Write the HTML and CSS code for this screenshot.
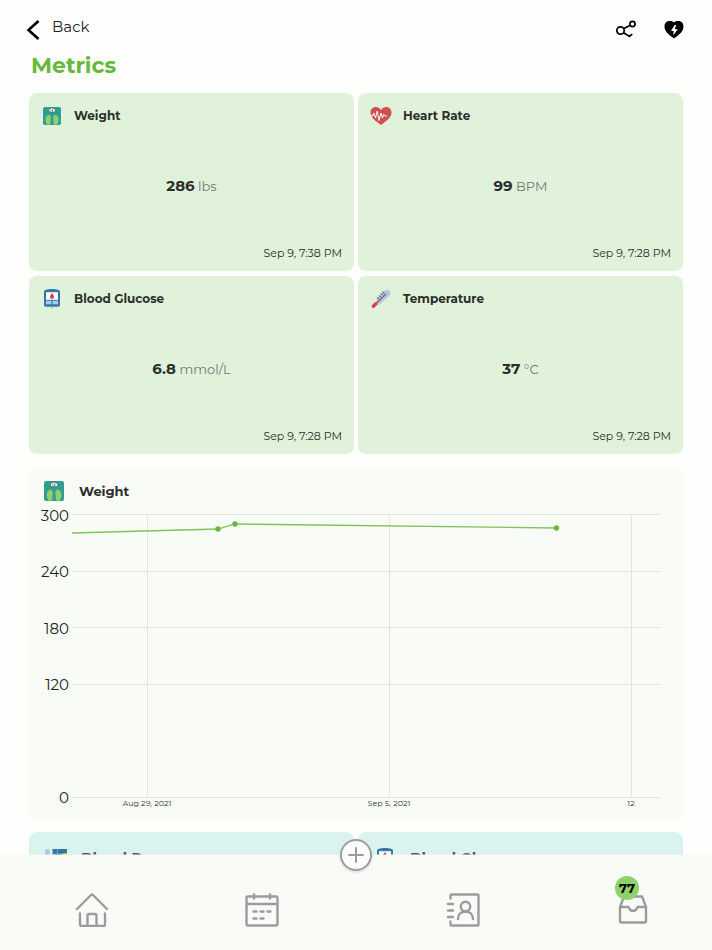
FILE: index.html
```html
<!DOCTYPE html>
<html lang="en">
<head>
<meta charset="utf-8">
<meta name="viewport" content="width=device-width, initial-scale=1">
<title>Metrics</title>
<link rel="stylesheet" href="styles.css">
</head>
<body>
<svg class="defs" aria-hidden="true">
  <symbol id="scale" viewBox="0 0 20 20">
    <rect width="20" height="20" rx="2" fill="#329e90"/>
    <path d="M6.2 4.8C6.2 2 8 1.2 10.1 1.2s4 .9 4 3.6c-1.6 1.3-6.3 1.3-7.9 0z" fill="#fff" stroke="#315d66" stroke-width=".8"/>
    <path d="M10 5l1.2-2.4M8 3.3l.8.7" stroke="#26323a" stroke-width=".9" fill="none"/>
    <path d="M7.6 9c1.3 1 1.5 3 1 5-.5 1.800 0 3-.4 4.700-.5 1.300-3.700 1.300-4.300 0-.4-2-1.300-3.700-1.100-5.700.2-2.400 2.700-5 4.800-4zM12.600 9c-1.300 1-1.500 3-1 5 .5 1.800 0 3 .4 4.700.5 1.300 3.700 1.300 4.300 0 .4-2 1.300-3.700 1.100-5.700-.2-2.400-2.700-5-4.800-4z" fill="#8fd168"/>
  </symbol>
  <symbol id="heart" viewBox="0 0 22 20">
    <path d="M11 19C6.500 15.500.5 12 .5 6.500.5 3.300 2.800 1 5.700 1 8 1 9.900 2.100 11 4c1.100-1.900 3-3 5.300-3 2.900 0 5.200 2.300 5.200 5.500C21.500 12 15.500 15.500 11 19z" fill="#cf5050"/>
    <path d="M1 10h1.500l1.200-3 1.800 5 1.700-7 1.800 9.500L11 7l1.400 5 1.300-3.500L15 10h2" fill="none" stroke="#fff" stroke-width="1" stroke-linejoin="round"/>
  </symbol>
  <symbol id="glucose" viewBox="0 0 18 20">
    <path d="M3 .7C6-.2 12-.2 15 .7c1.300.4 2 1 2 2.500v12c0 1.800-.8 2.600-2.300 2.600H3.300C1.800 17.800 1 17 1 15.200v-12C1 1.700 1.700 1.100 3 .7z" fill="#3377a7"/>
    <path d="M3 3.200h12v7.600H3z" fill="#fff"/>
    <path d="M3 11.800h5.500v3.500H3zM9.500 11.800H15v3.500H9.500z" fill="#9fcdec"/>
    <path d="M9 4c1 1.500 2 2.600 2 3.900a2 2 0 0 1-4 0C7 6.600 8 5.500 9 4z" fill="#d34747"/>
    <path d="M8.300 17h1.400v2.800H8.300z" fill="#8ab9cf"/>
  </symbol>
  <symbol id="thermometer" viewBox="0 0 20 20">
    <path d="M4 13L13 2.500C15 .5 17.300.7 18.500 2c1.200 1.400 1 3.500-.8 5.300L7 16.500z" fill="#a6cbea"/>
    <path d="M6 8.500l2 1.500M7.800 6.500l2 1.500M9.600 4.600l2 1.500M11.400 2.800l2 1.500" stroke="#387da9" stroke-width="1.300"/>
    <path d="M4 15.500L15 5" stroke="#cf4545" stroke-width="1.100"/>
    <path d="M2.300 17.300L4.600 15" stroke="#cf4545" stroke-width="3.400" stroke-linecap="round"/>
  </symbol>
  <symbol id="pressure" viewBox="0 0 22 20">
    <rect x="0" y="1" width="5" height="9" rx="2.500" fill="#a5cbe6"/>
    <path d="M2.500 9v7q0 3 4 3h4" fill="none" stroke="#a5cbe6" stroke-width="1.500"/>
    <path d="M7.500 1H22v13H7.500z" fill="#3377a7"/>
    <path d="M12.500 1v13M7.500 6H22" stroke="#8db9d5" stroke-width=".6"/>
    <circle cx="20" cy="9.500" r="4.500" fill="#f5c52c"/>
  </symbol>
</svg>

<div class="app">
  <main class="content">
    <header class="topbar">
      <a class="back" href="#">
        <svg class="back-icon" viewBox="0 0 14 20" aria-hidden="true"><path d="M12.500 1L2.500 10l10 9" fill="none" stroke="#000" stroke-width="2.600"/></svg>
        <span>Back</span>
      </a>
      <div class="actions">
        <button class="icon-button" type="button" aria-label="Share">
          <svg viewBox="0 0 20 20" fill="none" stroke="#000" stroke-width="1.700" aria-hidden="true"><circle cx="4.500" cy="10.500" r="3.700"/><circle cx="16.500" cy="4" r="2.600"/><path d="M8 8.600l6.200-3.300M7.500 12.700l5.800 3.700M12.800 15l.8 1.300 2.700-2.200"/></svg>
        </button>
        <button class="icon-button" type="button" aria-label="Health monitor">
          <svg viewBox="0 0 20 20" aria-hidden="true"><path d="M10 18.500C6 15.500.5 12 .5 6.500.5 3.200 2.600 1 5.400 1 7.500 1 9 1.200 10 2.500c1-1.300 2.500-1.500 4.600-1.500 2.800 0 4.900 2.200 4.900 5.500 0 5.500-5.500 9-9.500 12z"/><path d="M10.600 5L7 11h2.700l-.5 4.500 4.500-6.200h-2.900L12.100 5z" fill="#fff"/></svg>
        </button>
      </div>
    </header>
    <h1 class="page-title">Metrics</h1>

    <section class="cards" aria-label="Latest readings">
      <article class="card">
        <header class="card-head"><svg class="card-icon small" aria-hidden="true"><use href="#scale"/></svg><h2>Weight</h2></header>
        <p class="reading"><strong>286</strong> lbs</p>
        <time class="date">Sep 9, 7:38 PM</time>
      </article>
      <article class="card">
        <header class="card-head"><svg class="card-icon" aria-hidden="true"><use href="#heart"/></svg><h2>Heart Rate</h2></header>
        <p class="reading"><strong>99</strong> BPM</p>
        <time class="date">Sep 9, 7:28 PM</time>
      </article>
      <article class="card">
        <header class="card-head"><svg class="card-icon" aria-hidden="true"><use href="#glucose"/></svg><h2>Blood Glucose</h2></header>
        <p class="reading"><strong>6.8</strong> mmol/L</p>
        <time class="date">Sep 9, 7:28 PM</time>
      </article>
      <article class="card">
        <header class="card-head"><svg class="card-icon" aria-hidden="true"><use href="#thermometer"/></svg><h2>Temperature</h2></header>
        <p class="reading"><strong>37</strong> °C</p>
        <time class="date">Sep 9, 7:28 PM</time>
      </article>
    </section>

    <section class="panel">
      <header class="section-head"><svg class="section-icon" aria-hidden="true"><use href="#scale"/></svg><h2>Weight</h2></header>
      <svg class="chart" viewBox="0 0 656 308" role="img" aria-label="Weight over time">
        <path class="grid" d="M44 8.500h588M44 65.500h588M44 121.500h588M44 178.500h588M44 291.500h588M119.500 9v282M361.500 9v282M603.500 9v282"/>
        <g class="axis-y">
          <text x="41" y="15">300</text><text x="41" y="71">240</text><text x="41" y="128">180</text><text x="41" y="184">120</text><text x="41" y="297">0</text>
        </g>
        <g class="axis-x">
          <text x="119" y="300">Aug 29, 2021</text><text x="361" y="300">Sep 5, 2021</text><text x="603" y="300">12</text>
        </g>
        <path class="line" d="M44 27l146-4 17-5 321 4"/>
        <g class="points"><circle cx="190" cy="23" r="2.700"/><circle cx="207" cy="18" r="2.700"/><circle cx="528.500" cy="22" r="2.700"/></g>
      </svg>
    </section>

    <section class="cards" aria-label="More readings">
      <article class="card teal">
        <header class="section-head"><svg class="section-icon" aria-hidden="true"><use href="#pressure"/></svg><h2>Blood Pressure</h2></header>
      </article>
      <article class="card teal">
        <header class="section-head"><svg class="section-icon" aria-hidden="true"><use href="#glucose"/></svg><h2>Blood Glucose</h2></header>
      </article>
    </section>
  </main>

  <nav class="tabbar" aria-label="Main">
    <div class="tabs">
      <a class="tab" href="#" aria-label="Home"><svg viewBox="0 0 34 34" aria-hidden="true"><path d="M2 16L16 2q1-1 2 0l14 14M5 20.500v11Q5 33 6.500 33h22q1.500 0 1.500-1.500v-11M12.500 32.500v-10q0-1.500 1.500-1.500h6q1.500 0 1.500 1.500v10"/></svg></a>
      <a class="tab" href="#" aria-label="Calendar"><svg viewBox="0 0 34 34" aria-hidden="true"><rect x="1.500" y="3.500" width="31" height="29" rx="1.500"/><path d="M2 11h30M9 1.500V5.500M25 1.500V5.500M8.500 18.500h3M15.500 18.500h3M22.500 18.500h3M8.500 25.500h3M15.500 25.500h3"/></svg></a>
    </div>
    <div class="tabs">
      <a class="tab" href="#" aria-label="Contacts"><svg viewBox="0 0 34 34" aria-hidden="true"><path d="M4.500 5.500v-3q0-1 1-1H31.500q1 0 1 1v29q0 1-1 1h-26q-1 0-1-1v-3M2 11h5M2 17.500h5M2 24h5M12 26c0-5 3.500-7.500 7.500-7.500S27 21 27 26"/><circle cx="19.500" cy="13.500" r="4.700"/></svg></a>
      <a class="tab" href="#" aria-label="Inbox, 77 unread"><svg viewBox="0 0 34 34" aria-hidden="true"><path d="M4 14L8 3.500h18L30 14v14q0 1.500-1.500 1.500h-23Q4 29.500 4 28zM4 14h8c1 0 1 .5 1.300 1.500 1 3 6.400 3 7.400 0 .3-1 .3-1.500 1.300-1.500h8"/></svg><span class="badge">77</span></a>
    </div>
    <button class="add" type="button" aria-label="Add metric"><svg viewBox="0 0 32 32" aria-hidden="true"><circle cx="16" cy="16" r="15"/><path d="M16 9v14M9 16h14"/></svg></button>
  </nav>
</div>
</body>
</html>
```

FILE: styles.css
```css
* { box-sizing: border-box; }

body {
  margin: 0;
  background: #fefefd;
  color: #2c302c;
  font-family: Montserrat, Inter, "Liberation Sans", sans-serif;
}

h1, h2, p { margin: 0; }
a { color: inherit; text-decoration: none; }
button { padding: 0; border: 0; background: none; }
svg { display: block; }
.defs { position: absolute; width: 0; height: 0; }

.app {
  display: flex;
  flex-direction: column;
  height: 100vh;
}

.content {
  flex: 1;
  min-height: 0;
  overflow-y: auto;
  scrollbar-width: none;
  padding: 12px 28px 0;
}

.topbar {
  display: flex;
  justify-content: space-between;
  height: 36px;
}

.back {
  display: flex;
  gap: 12px;
  margin-left: -2px;
  color: #222;
  font-size: 15px;
  line-height: 30px;
}

.back-icon { width: 14px; height: 20px; margin-top: 8px; }

.actions { display: flex; align-items: center; gap: 28px; }
.icon-button { width: 20px; height: 20px; }

.page-title {
  padding-left: 3px;
  color: #66b93d;
  font-size: 22px;
  line-height: 36px;
  margin-bottom: 9px;
}

.cards {
  display: grid;
  grid-template-columns: 1fr 1fr;
  gap: 5px 4px;
  padding: 0 1px;
}

.card {
  display: flex;
  flex-direction: column;
  justify-content: space-between;
  min-height: 178px;
  padding: 12px 12px 9px;
  border-radius: 8px;
  background: #e0f2d9;
}

.card.teal { background: #daf3ef; padding: 14px 16px; color: #555; }

.card-head { display: flex; align-items: center; gap: 11px; height: 22px; }
.card-head h2 { font-size: 12px; line-height: 22px; }
.card-icon { width: 22px; height: 20px; }
.card-icon.small { height: 18px; }

.reading {
  color: #777;
  font-size: 13px;
  line-height: 20px;
  text-align: center;
}

.reading strong { color: #2c302c; font-size: 15px; }

.date { font-size: 11px; line-height: 18px; text-align: right; }

.panel {
  margin: 12px 0;
  padding: 14px 0 6px;
  border-radius: 10px;
  background: #f9fbf7;
}

.section-head { display: flex; align-items: center; gap: 14px; }
.section-head h2 { font-size: 15px; line-height: 24px; }
.section-icon { width: 22px; height: 20px; }
.panel .section-head { padding-left: 15px; height: 22px; }
.panel h2 { font-size: 13px; }

.chart { width: 100%; height: auto; margin-top: 4px; }
.chart text { font-family: inherit; }
.grid { stroke: #e2e4e1; fill: none; }
.axis-y { font-size: 15px; fill: #222; text-anchor: end; }
.axis-x { font-size: 8px; fill: #333; text-anchor: middle; }
.line { fill: none; stroke: #7cc45a; stroke-width: 1.3; }
.points { fill: #66b93d; }

.tabbar {
  position: relative;
  display: grid;
  grid-template-columns: 1fr 1fr;
  gap: 167px;
  align-items: center;
  height: 95px;
  padding: 14px 62px 0 75px;
  background: #f9fbf7;
  box-shadow: 0 -1px 0 #f2f3f180;
}

.tabs { display: flex; justify-content: space-between; }
.tab { position: relative; width: 34px; height: 34px; }

.tab svg,
.add svg {
  fill: none;
  stroke: #9b9ca0;
  stroke-width: 2.4;
  stroke-linecap: round;
  stroke-linejoin: round;
}

.badge {
  position: absolute;
  top: -17px;
  left: -1px;
  width: 24px;
  height: 24px;
  border-radius: 50%;
  background: #8fd16c;
  color: #000;
  font-size: 13px;
  font-weight: 700;
  line-height: 24px;
  text-align: center;
}

.add {
  position: absolute;
  top: -16px;
  left: 50%;
  width: 32px;
  height: 32px;
  margin-left: -16px;
  border-radius: 50%;
  background: #fcfdfb;
  box-shadow: 0 1px 2px 1px #e3e7e3;
}

.add svg { stroke-width: 2; }
```
